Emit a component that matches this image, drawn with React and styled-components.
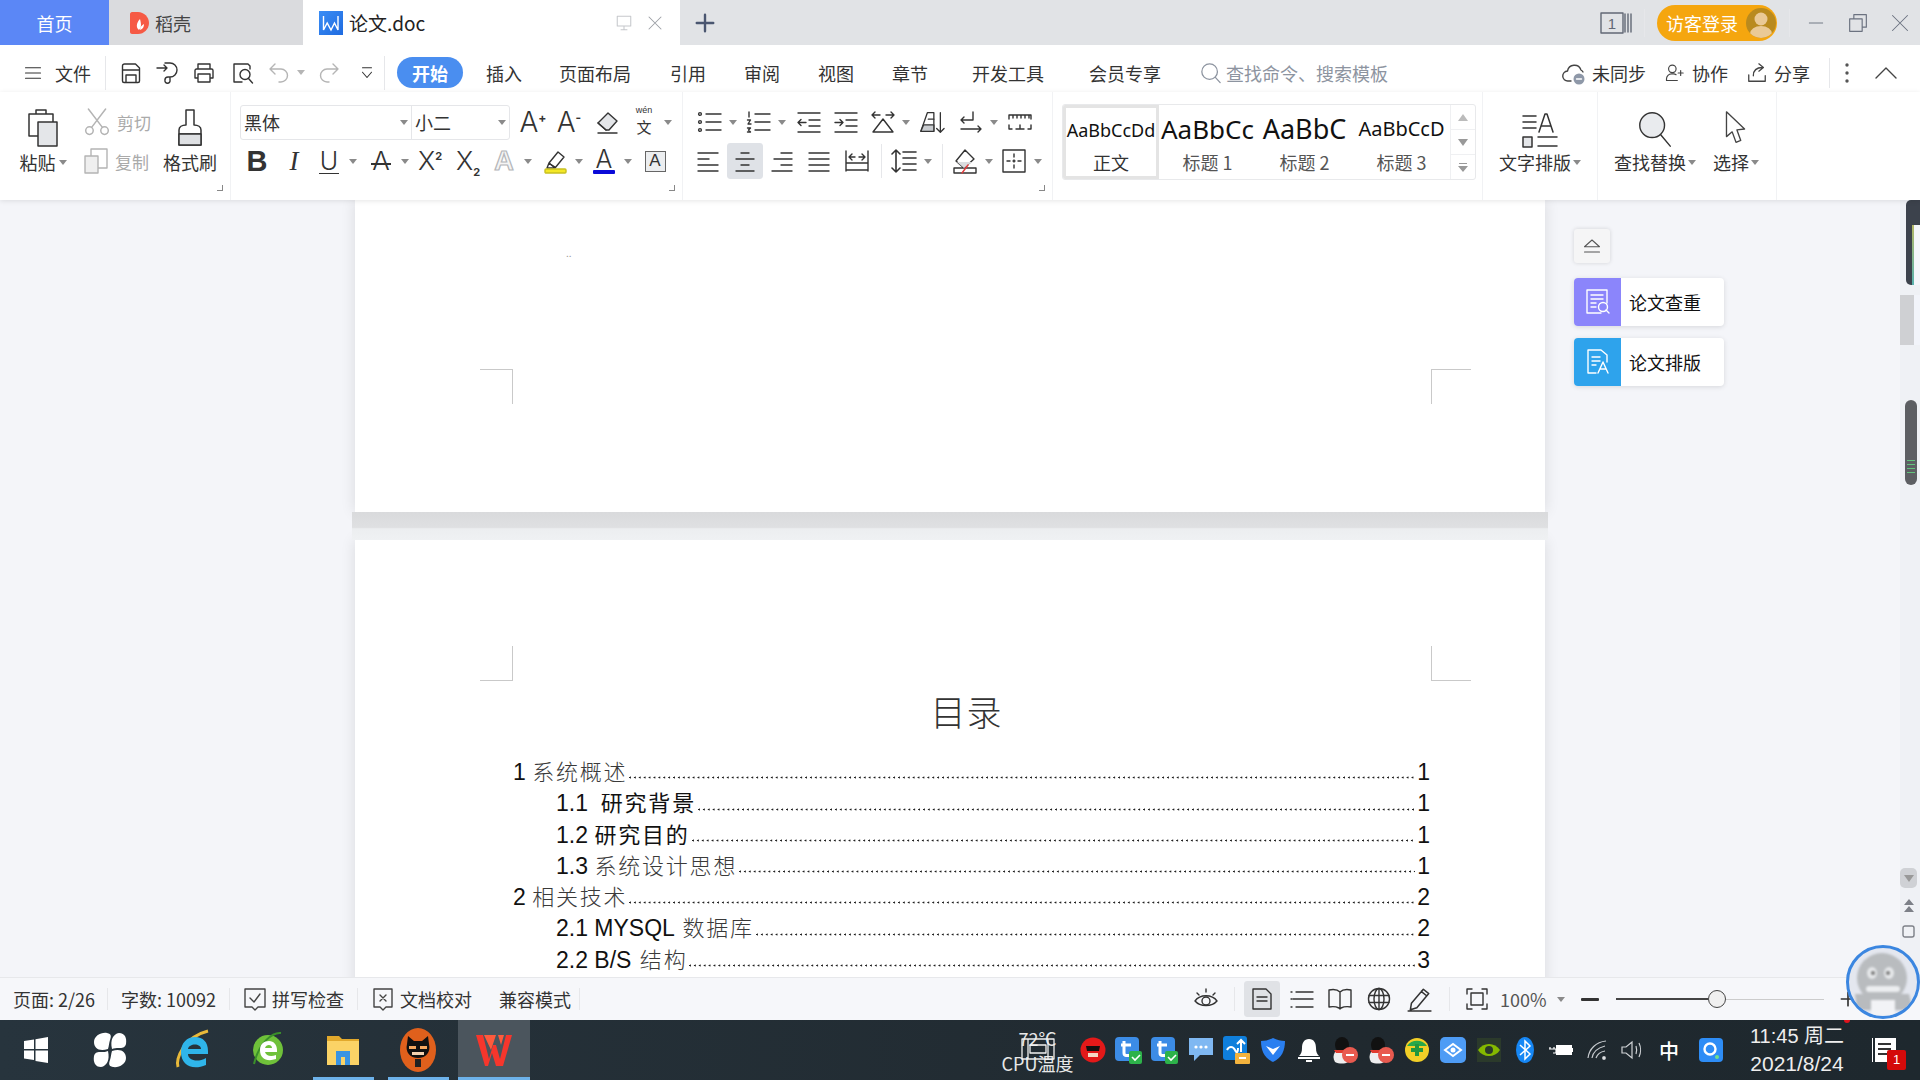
import React from "react";
import styled, { createGlobalStyle } from "styled-components";

const UI = '"Noto Sans CJK SC","Noto Sans",sans-serif';
const Global = createGlobalStyle`
  html, body { margin: 0; padding: 0; background: #fff; }
  body { font-family: ${UI}; color: #333; }
  * { box-sizing: border-box; }
`;

const Screen = styled.div`
  position: relative; width: 1920px; height: 1080px; overflow: hidden;
  display: flex; flex-direction: column; background: #f4f5f9;
`;

/* ---------- shared ---------- */
const Svg = ({ w = 24, h = 24, vb = "0 0 24 24", c = "#333", sw = 1.4, children }) => (
  <svg width={w} height={h} viewBox={vb} fill="none" stroke={c} strokeWidth={sw} strokeLinecap="round" strokeLinejoin="round">{children}</svg>
);
const P = ({ d, ...r }) => <path d={d} {...r} />;
const Caret = styled.i`
  display: block; flex: none; width: 0; height: 0; margin-left: ${p => p.$ml ?? 7}px;
  border-left: 4px solid transparent; border-right: 4px solid transparent;
  border-top: 5px solid ${p => p.$c || "#8a8a8a"};
`;
const Sep = styled.div`
  flex: none; width: 1px; height: ${p => p.$h || 32}px; margin-left: ${p => p.$ml || 0}px;
  margin-right: ${p => p.$mr || 0}px; background: #e6e7ea;
`;

/* ---------- title bar ---------- */
const TitleBar = styled.div`
  flex: none; height: 45px; display: flex; align-items: center; background: #e1e3e6;
`;
const HomeTab = styled.div`
  width: 109px; height: 100%; background: #5b87f6; color: #fff; font-size: 18px;
  display: flex; align-items: center; justify-content: center;
`;
const DaokeTab = styled.div`
  width: 194px; height: 100%; background: #dadbde; color: #444; font-size: 18px;
  display: flex; align-items: center; gap: 6px; padding-left: 21px;
`;
const DocTab = styled.div`
  width: 377px; height: 100%; background: #fff; color: #222; font-size: 19px;
  display: flex; align-items: center; padding: 0 16px 0 16px; position: relative;
`;
const DocName = styled.span` margin-left: 6px; flex: 1; font-family: "Noto Sans CJK SC","Liberation Sans",sans-serif; `;
const DocGap = styled.span` flex: none; width: 13px; `;
const PlusBtn = styled.div` margin-left: 14px; width: 22px; height: 22px; display: flex; `;
const TitleRight = styled.div` margin-left: auto; display: flex; align-items: center; `;
const LoginPill = styled.div`
  width: 120px; height: 36px; border-radius: 18px; background: #f5a60f; color: #fff; font-size: 18px;
  display: flex; align-items: center; padding-left: 9px; margin: 0 12px;
`;
const Avatar = styled.div`
  width: 30px; height: 30px; border-radius: 50%; margin-left: 8px; background: #b98a1e; overflow: hidden; flex: none;
`;
const WinBtn = styled.div` margin-left: ${p => p.$ml}px; display: flex; `;

/* ---------- menu row ---------- */
const MenuRow = styled.div`
  flex: none; height: 47px; background: #fff; display: flex; align-items: center; padding: 8px 0 0 24px; position: relative;
`;
const MenuText = styled.span`
  flex: none; margin-left: ${p => p.$ml || 0}px; font-size: 18px; line-height: 24px; color: ${p => p.$c || "#333"}; white-space: nowrap;
`;
const ActivePill = styled.span`
  flex: none; width: 66px; height: 31px; border-radius: 16px; margin-left: ${p => p.$ml}px;
  background: #4a8ef0; color: #fff; font-size: 18px; font-weight: 700;
  display: flex; align-items: center; justify-content: center;
`;
const QuickIcon = styled.div`
  flex: none; width: ${p => p.$w || 24}px; height: 24px; margin-left: ${p => p.$ml || 0}px;
  display: flex; align-items: center; justify-content: center;
`;

/* ---------- ribbon ---------- */
const Ribbon = styled.div`
  flex: none; height: 108px; background: #fff; display: flex; position: relative; z-index: 2;
  box-shadow: 0 1px 5px rgba(0,0,0,.1);
`;
const Group = styled.div`
  flex: none; position: relative; width: ${p => p.$w}px; height: 100%;
  border-right: 1px solid #f1f2f4; padding-top: 11px; padding-left: ${p => p.$pl || 0}px;
  display: ${p => p.$row ? "flex" : "block"};
`;
const Corner = styled.i`
  position: absolute; right: 7px; bottom: 9px; width: 6px; height: 6px;
  border-right: 1px solid #888; border-bottom: 1px solid #888;
`;
const ToolRow = styled.div`
  display: flex; align-items: center; height: 38px; margin-bottom: 1px; margin-left: ${p => p.$mgl || 0}px; padding-left: ${p => p.$pl || 0}px;
`;
const Tool = styled.div` flex: none; width: ${p => p.$w}px; margin-left: ${p => p.$ml || 0}px; display: flex; align-items: center; `;
const IconBox = styled.div`
  flex: none; width: 26px; height: 26px; display: flex; align-items: center; justify-content: center; position: relative;
  background: ${p => p.$active ? "#dfe2e7" : "transparent"};
  box-shadow: ${p => p.$active ? "0 0 0 5px #dfe2e7" : "none"};
  border-radius: 1px;
`;
const Glyph = styled.span`
  font-family: ${p => p.$f || '"Liberation Sans",sans-serif'}; font-size: ${p => p.$s || 24}px; line-height: 26px;
  font-weight: ${p => p.$wt || 400}; font-style: ${p => p.$it ? "italic" : "normal"}; color: ${p => p.$c || "#333"};
  position: relative; white-space: nowrap;
`;
const OutlineA = styled(Glyph)` color: #f5f5f5; -webkit-text-stroke: 1.2px #b4b6b9; `;
const UnderU = styled(Glyph)` border-bottom: 1.5px solid #333; line-height: 24px; padding: 0 1px; `;
const TopA = styled(Glyph)` line-height: 22px; margin-top: -4px; `;
const Sup = styled.sup` font-size: ${p => p.$s || 12}px; line-height: 0; vertical-align: ${p => p.$sub ? "-6px" : "10px"}; font-weight: 700; `;
const StrikeLine = styled.i` position: absolute; left: -1px; right: -1px; top: 15px; height: 1.5px; background: #333; `;
const UnderBar = styled.i`
  position: absolute; left: ${p => p.$l ?? 2}px; right: ${p => p.$l ?? 2}px; bottom: 0; height: ${p => p.$h || 4}px;
  background: ${p => p.$c}; border-radius: 1px;
`;
const FontSelect = styled.div`
  width: 270px; height: 35px; display: flex; align-items: center; border: 1px solid #e5e6e9; border-radius: 3px; flex: none;
`;
const FontCell = styled.div`
  width: ${p => p.$w}px; height: 100%; display: flex; align-items: center; justify-content: space-between;
  padding: 0 3px 0 3px; font-size: 18px; color: #333; border-right: ${p => p.$b ? "1px solid #e5e6e9" : "0"};
`;
const Pinyin = styled.div`
  width: 26px; height: 30px; margin-top: -4px; display: flex; flex-direction: column; align-items: center; color: #333;
`;
const PinyinTop = styled.span` font: 9px/10px "Liberation Sans",sans-serif; `;
const PinyinCn = styled.span` margin-top: 4px; font-size: 15px; line-height: 15px; `;
const BoxA = styled.span`
  width: 21px; height: 21px; border: 1.5px solid #666; background: #eceef0; display: flex; align-items: center; justify-content: center;
  font: 300 17px "Liberation Sans",sans-serif; color: #333;
`;

const BigTool = styled.div`
  flex: none; width: ${p => p.$w}px; margin-left: ${p => p.$ml || 0}px; height: 77px;
  display: flex; flex-direction: column; align-items: center;
`;
const BigIcon = styled.div` height: 46px; display: flex; align-items: flex-end; justify-content: center; `;
const BigLabel = styled.div`
  height: 26px; display: flex; align-items: center; font-size: 18px; color: #333; white-space: nowrap;
`;
const Mini = styled.div`
  display: flex; align-items: center; height: 38px; margin-bottom: 1px; gap: 7px; font-size: 17px; color: #aaa; white-space: nowrap;
`;
const MiniCol = styled.div` flex: none; width: 76px; margin-left: 16px; `;

const Gallery = styled.div`
  flex: none; width: 414px; height: 76px; margin: 1px 0 0 9px; display: flex;
  border: 1px solid #e8e9eb; border-radius: 3px; overflow: hidden;
`;
const StyleCard = styled.div`
  flex: none; width: ${p => p.$w}px; height: 100%; overflow: hidden; text-align: center;
  border: ${p => p.$sel ? "3px solid #e4e4e4" : "0"};
  display: flex; flex-direction: column; align-items: center;
`;
const Preview = styled.div`
  height: ${p => p.$sel ? 40 : 43}px; line-height: ${p => p.$sel ? 44 : 48}px; white-space: nowrap; color: #111;
  font-family: "Noto Sans",sans-serif; font-size: ${p => p.$s}px;
`;
const StyleName = styled.div` font-size: 18px; line-height: 28px; color: ${p => p.$c || "#555"}; `;
const GalleryScroll = styled.div`
  flex: 1; border-left: 1px solid #eff0f2; display: flex; flex-direction: column;
`;
const ScrollCell = styled.div`
  flex: 1; display: flex; align-items: center; justify-content: center; border-bottom: ${p => p.$b ? "1px solid #eff0f2" : 0};
`;

/* ---------- workspace ---------- */
const Workspace = styled.div` flex: 1; min-height: 0; display: flex; overflow: hidden; background: #f4f5f9; `;
const Canvas = styled.div` flex: none; width: 1900px; display: flex; padding-left: 355px; overflow: hidden; `;
const PageColumn = styled.div` flex: none; width: 1190px; display: flex; flex-direction: column; `;
const Page = styled.div`
  flex: none; position: relative; height: ${p => p.$h}px; background: #fff;
  box-shadow: 0 0 14px rgba(0,0,0,.11);
  padding: ${p => p.$pad || 0};
`;
const PageGap = styled.div`
  flex: none; height: 28px; margin: 0 -3px; position: relative; z-index: 1;
  background: linear-gradient(#d9dadc 0, #dfe0e2 55%, #eceef0 60%, #eff1f3 100%);
`;
const CropMark = styled.i`
  position: absolute; left: ${p => p.$x}px; top: ${p => p.$y}px; width: ${p => p.$w || 33}px; height: 35px;
  border-${p => p.$v}: 1px solid #c9c9c9; border-${p => p.$h}: 1px solid #c9c9c9;
`;
const Specks = styled.span` position: absolute; left: 211px; top: 48px; font-size: 10px; line-height: 10px; color: #999; `;
const DocTitle = styled.h1`
  margin: 0 0 22px -10px; font-size: 35px; line-height: 44px; font-weight: 300; text-align: center; color: #333; letter-spacing: 1px;
`;
const TocRow = styled.div`
  height: 31.3px; display: flex; align-items: baseline; padding-left: ${p => p.$lvl === 2 ? 43 : 0}px;
  font-family: "Liberation Sans","Noto Sans CJK SC",sans-serif; font-size: 23px; line-height: 31px; color: #111; white-space: pre;
`;
const TocCn = styled.span`
  font-family: "Noto Sans CJK SC",sans-serif; font-size: 22px; line-height: 31px; letter-spacing: 1.8px; margin-left: ${p => p.$ml || 0}px;
  font-weight: ${p => p.$bold ? 400 : 300}; color: ${p => p.$bold ? "#111" : "#3a3a3a"};
`;
const Leader = styled.span`
  flex: 1; height: 3px; align-self: flex-end; margin: 0 2px 7px 2px;
  background-image: radial-gradient(circle at 1.2px 1.5px, #222 .9px, transparent 1.15px);
  background-size: 4.9px 3px; background-repeat: repeat-x;
`;

const SidePanel = styled.div` flex: none; width: 150px; margin-left: 29px; padding-top: 29px; `;
const CollapseBtn = styled.div`
  width: 36px; height: 34px; margin-bottom: 15px; background: #f5f5f6; border-radius: 3px;
  box-shadow: 0 0 4px rgba(0,0,0,.14); display: flex; align-items: center; justify-content: center;
`;
const PaperBtn = styled.div`
  width: 150px; height: 48px; margin-bottom: 12px; background: #fff; border-radius: 4px; overflow: hidden;
  box-shadow: 0 1px 5px rgba(0,0,0,.12); display: flex; align-items: center; font-size: 18px; color: #111;
`;
const PaperIcon = styled.div`
  flex: none; width: 47px; height: 100%; margin-right: 8px; background: ${p => p.$c};
  display: flex; align-items: center; justify-content: center;
`;

const Gutter = styled.div` flex: none; width: 20px; background: #eff1f5; display: flex; flex-direction: column; `;
const MiniMap = styled.div`
  flex: none; margin: 0 0 0 6px; height: 85px; background: #3c424c; border-radius: 5px 0 0 5px; padding: 25px 0 0 6px; overflow: hidden;
`;
const MiniInner = styled.div`
  height: 60px; background: #f4f6fa; border-left: 2px solid; border-image: linear-gradient(#b5b864,#58b3b0) 1;
`;
const GreyBlock = styled.div`
  flex: none; height: 50px; margin-top: 10px; background: #cfd0d3; padding-left: 14px;
`;
const GreyInner = styled.div` height: 100%; background: #f2f4fa; `;
const Thumb = styled.div`
  flex: none; width: 12px; height: 85px; margin: 55px 0 0 5px; border-radius: 6px; background: #5d5f63;
  padding: 60px 2px 0; display: flex; flex-direction: column; gap: 3px; overflow: hidden;
`;
const ThumbLine = styled.i` flex: none; height: 1px; background: #62c47c; `;
const ArrowBtn = styled.div`
  flex: none; width: 17px; height: 20px; margin-top: 383px; border-radius: 5px; background: #cfd1d5;
  display: flex; align-items: center; justify-content: center;
`;
const GutterIcon = styled.div`
  flex: none; width: 17px; height: 14px; margin-top: ${p => p.$mt}px; display: flex; justify-content: center;
`;

/* ---------- status bar ---------- */
const StatusBar = styled.div`
  flex: none; height: 43px; background: #f6f7fa; border-top: 1px solid #e7e8eb; display: flex; align-items: center;
  padding-right: 64px; position: relative; z-index: 2; font-size: 18px; color: #333;
`;
const StatusItem = styled.div`
  flex: none; width: ${p => p.$w}px; height: 22px; padding-left: ${p => p.$pl}px; display: flex; align-items: center; gap: 5px;
  border-right: ${p => p.$b ? "1px solid #e6e7ea" : 0}; white-space: nowrap; font-size: ${p => p.$s || 18}px;
`;
const StatusRight = styled.div` margin-left: auto; display: flex; align-items: center; `;
const ViewIcon = styled.div`
  flex: none; width: 26px; height: 26px; margin-left: ${p => p.$ml || 0}px; display: flex; align-items: center; justify-content: center;
  background: ${p => p.$active ? "#e0e2e6" : "transparent"};
  box-shadow: ${p => p.$active ? "0 0 0 5px #e0e2e6" : "none"}; border-radius: 1px;
`;
const Zoom = styled.span` margin-left: 10px; font-size: 18px; color: #555; width: 50px; `;
const MinusBar = styled.i` flex: none; width: 18px; height: 3px; border-radius: 1px; background: #333; margin-left: 16px; `;
const Slider = styled.div` flex: none; position: relative; width: 208px; height: 18px; margin-left: 17px; display: flex; align-items: center; `;
const SliderFill = styled.i` width: 92px; height: 2px; background: #444; `;
const SliderKnob = styled.i` flex: none; width: 18px; height: 18px; border-radius: 50%; background: #f0f0f0; border: 1.5px solid #444; `;
const SliderRest = styled.i` flex: 1; height: 1px; background: #ccc; `;
const PlusIcon = styled.div` flex: none; width: 16px; height: 16px; margin-left: 16px; display: flex; `;

/* ---------- taskbar ---------- */
const Taskbar = styled.div`
  flex: none; height: 60px; background: linear-gradient(90deg,#27343d,#20292f 70%,#1e282e); display: flex; align-items: center; color: #fff; position: relative;
`;
const TaskSlot = styled.div`
  flex: none; position: relative; width: ${p => p.$w}px; margin-left: ${p => p.$ml || 0}px; height: 100%;
  display: flex; align-items: center; justify-content: center; background: ${p => p.$active ? "#4b555d" : "transparent"};
  &::after {
    content: ""; display: ${p => p.$under ? "block" : "none"}; position: absolute; bottom: 0; left: 50%;
    width: ${p => p.$under}px; height: 3px; margin-left: ${p => -(p.$under || 0) / 2}px; background: #6db2ea;
  }
`;
const TempWidget = styled.div`
  flex: none; position: relative; width: 73px; margin-left: 471px; height: 100%; font-size: 18px; line-height: 25px; padding-top: 6px;
  color: #e8e8e8; white-space: nowrap; text-align: center;
`;
const TempIcon = styled.div` position: absolute; left: 19px; top: 16px; `;
const TrayRow = styled.div` flex: none; display: flex; margin-left: 1px; align-items: center; height: 100%; `;
const TraySlot = styled.div` flex: none; width: ${p => p.$w || 36}px; height: 100%; display: flex; align-items: center; justify-content: center; font-size: 20px; font-weight: 500; `;
const Clock = styled.div`
  flex: none; width: 112px; margin-left: 12px; text-align: center; font-family: "Liberation Sans","Noto Sans CJK SC",sans-serif;
  font-size: 20px; line-height: 27px; color: #eee; position: relative; white-space: nowrap;
`;
const ClockDate = styled.div` font-size: 21px; `;
const RedDot = styled.i` position: absolute; right: 3px; top: -6px; width: 6px; height: 6px; border-radius: 50%; background: #e0141c; `;
const ActionCenter = styled.div` flex: none; position: relative; margin-left: 19px; width: 26px; height: 24px; display: flex; gap: 2px; `;
const ActionBar = styled.i` width: 1px; height: 24px; background: #fff; `;
const ActionPaper = styled.div`
  width: 21px; height: 24px; background: #fff; padding: 5px 3px; display: flex; flex-direction: column; gap: 3px;
`;
const ActionLine = styled.i` display: block; height: 2px; width: ${p => p.$w}px; background: #333; `;
const ActionBadge = styled.span`
  position: absolute; left: 15px; top: 12px; width: 19px; height: 20px; background: #d40a0a; color: #fff; font: 13px/20px "Liberation Sans",sans-serif; text-align: center; border-radius: 2px;
`;

const RobotBall = styled.div`
  position: absolute; left: 1846px; top: 945px; width: 74px; height: 74px; border-radius: 50%; z-index: 5;
  border: 3px solid #3b86e0; background: #e4e7ef; overflow: hidden;
  & > svg { filter: blur(1.2px); }
`;

/* ---------- icon data ---------- */
const T = ({ w, ml, icon, caret, active }) => (
  <Tool $w={w} $ml={ml}><IconBox $active={active}>{icon}</IconBox>{caret && <Caret />}</Tool>
);
const lines = ys => ys.map(([x1, x2, y], i) => <P key={i} d={`M${x1} ${y}H${x2}`} />);

const ic = {
  menu: <Svg w={20} h={20} sw={1.5}><P d="M2 5h20M2 12h20M2 19h20" /></Svg>,
  save: <Svg><P d="M3.5 5a2 2 0 0 1 2-2h11l4 4v13a1.5 1.5 0 0 1-1.5 1.5H5A1.5 1.5 0 0 1 3.5 20zM3.5 9h17M7 21v-7h10v7" /></Svg>,
  pdf: <Svg><P d="M1 7h10M8 4l3 3-3 3M9 2h5a7 7 0 0 1 0 14h-2c-2 0-3 1-3 3a2.6 2.6 0 1 0 5 0v-3" /></Svg>,
  print: <Svg><P d="M6 8V3h12v5M6 17H3V9.5A1.5 1.5 0 0 1 4.5 8h15A1.5 1.5 0 0 1 21 9.5V17h-3M6 13h12v8H6z" /></Svg>,
  preview: <Svg><P d="M20 8V5l-2-2H4v18h8" /><circle cx="15" cy="13.5" r="5" /><P d="M18.5 17.5l4 4.5" /></Svg>,
  undo: <Svg c="#b5b5b5"><P d="M8 3 3 8l5 5M3 8h11a6.5 6.5 0 0 1 0 13h-2" /></Svg>,
  redo: <Svg c="#b5b5b5"><P d="M16 3l5 5-5 5M21 8H10a6.5 6.5 0 0 0 0 13h2" /></Svg>,
  qa: <Svg w={18} h={18}><P d="M6 5h12M6 11l6 7 6-7" /></Svg>,
  search: <Svg w={22} h={22} c="#8d94a0"><circle cx="10.5" cy="10.5" r="8.5" /><P d="M16.5 16.5l5.5 6" /></Svg>,
  cloud: <Svg w={26} h={26} c="#444"><P d="M10 20H7a5 5 0 0 1-.5-10A7 7 0 0 1 20 9a5 5 0 0 1 2 2" /><circle cx="18" cy="18" r="5.5" fill="#8e98a8" stroke="none" /><P d="M15.5 18h5" stroke="#fff" /></Svg>,
  user: <Svg w={24} h={24} c="#444"><circle cx="10" cy="7" r="4.5" /><P d="M3 21v-2a6 6 0 0 1 6-6h2.5a6 6 0 0 1 3 1M3 21h13M20 9v6M17 12h6" /></Svg>,
  share: <Svg w={24} h={24} c="#444"><P d="M3 14v7h18v-6M8 15c0-6 4-9 10-9M14 2l5 4-5 4" /></Svg>,
  dots: <Svg w={6} h={24} vb="0 0 6 24" sw={0}><circle cx="3" cy="4" r="1.7" fill="#555" /><circle cx="3" cy="12" r="1.7" fill="#555" /><circle cx="3" cy="20" r="1.7" fill="#555" /></Svg>,
  chev: <Svg w={24} h={20} vb="0 0 24 20" c="#444"><P d="M2 15 12 5l10 10" /></Svg>,
  paste: <Svg w={40} h={42} vb="0 0 40 42" c="#333" sw={1.5}><P d="M15 29H6V7h24v8M13 7V3h10v4" /><rect x="15" y="15" width="19" height="24" fill="#e4e6e9" /></Svg>,
  cut: <Svg c="#b4b4b4" w={26} h={28} vb="0 0 24 26"><circle cx="5" cy="21" r="3.5" /><circle cx="19" cy="21" r="3.5" /><P d="M7 18 20 1M17 18 4 1" /></Svg>,
  copy: <Svg c="#b4b4b4" w={24} h={28} vb="0 0 24 26"><P d="M7 18V1h16v19h-9" /><rect x="1" y="8" width="13" height="17" fill="#efefef" /></Svg>,
  brush: <Svg w={32} h={42} vb="0 0 32 42" c="#333" sw={1.5}><P d="M12 18V3h8v15M12 18c-4 0-7 2-7 5v15h22V23c0-3-3-5-7-5M5 27h22" /><P d="M5 27h22v11H5z" fill="#dfe1e4" /></Svg>,
  eraser: <Svg><P d="M3 13 13 3l9 8-8 9h-3z" fill="#e4e6e9" /><P d="M3 13l8 7M3 23h19" /></Svg>,
  hl: <Svg w={26} h={26} vb="0 0 26 26"><P d="M7 15 16 4l6 5-9 11zM7 15l-2 5 8 0" /><P d="M8 16l5 3" /><rect x="3" y="21" width="21" height="4" rx="1" fill="#f4e826" stroke="#c8c020" /></Svg>,
  bul: <Svg w={26} h={24}>{<><circle cx="3" cy="4" r="1.4" /><circle cx="3" cy="12" r="1.4" /><circle cx="3" cy="20" r="1.4" /></>}{lines([[9, 24, 4], [9, 24, 12], [9, 24, 20]])}</Svg>,
  num: <Svg w={26} h={24}>{<><P d="M3 2v5" /><P d="M1.5 10h3L2 14h3" /><P d="M1.5 18h3l-2 2 2 2h-3" /></>}{lines([[9, 24, 4], [9, 24, 12], [9, 24, 20]])}</Svg>,
  ded: <Svg w={26} h={24}>{lines([[2, 24, 3], [13, 24, 10], [13, 24, 16], [2, 24, 22]])}<P d="M10 12.5H2M5 9.5l-3 3 3 3" /></Svg>,
  ind: <Svg w={26} h={24}>{lines([[2, 24, 3], [13, 24, 10], [13, 24, 16], [2, 24, 22]])}<P d="M2 12.5h8M7 9.5l3 3-3 3" /></Svg>,
  cross: <Svg w={26} h={24}><P d="M3 22 13 9l10 13zM2 5h8M5 2 2 5l3 3M24 5h-8M21 2l3 3-3 3" /></Svg>,
  sort: <Svg w={28} h={26} vb="0 0 28 26"><P d="M2 23 9 3h7v20z" /><P d="M5 16h11v7H2z" fill="#c9ccd0" /><P d="M10 10h6M23 3v21M19 20l4 4 4-4" /></Svg>,
  brk: <Svg w={26} h={24}><P d="M15 2v8H3M6 7l-3 3 3 3M3 19h20M20 16l3 3-3 3" /></Svg>,
  ruler: <Svg w={26} h={24}><P d="M2 9V5h22v4M6 5v3M10 5v3M14 5v3M18 5v3M22 5v3M2 15v4h3M9 19h8M13 15v4M21 19h3v-4" /></Svg>,
  al: <Svg>{lines([[2, 22, 4], [2, 13, 10], [2, 22, 16], [2, 22, 22]])}</Svg>,
  ac: <Svg>{lines([[8, 16, 4], [3, 21, 10], [8, 16, 16], [3, 21, 22]])}</Svg>,
  ar: <Svg>{lines([[11, 22, 4], [4, 22, 10], [11, 22, 16], [2, 22, 22]])}</Svg>,
  aj: <Svg>{lines([[2, 22, 4], [2, 22, 10], [2, 22, 16], [2, 22, 22]])}</Svg>,
  dist: <Svg w={26} h={24}><P d="M2 2v20M24 2v20M2 14h22M2 21h22M6 8h5M8 5 5 8l3 3M20 8h-5M18 5l3 3-3 3" /></Svg>,
  ls: <Svg w={26} h={26} vb="0 0 26 26" sw={1.6}><P d="M5 2v22M1 6l4-4 4 4M1 20l4 4 4-4M12 4h13M12 10h13M12 16h13M12 22h13" /></Svg>,
  fill: <Svg w={26} h={26} vb="0 0 26 26"><P d="M13 2 4 13l8 7 10-9zM2 20h22v5H2z" /><P d="M5 14h15l-8 6z" fill="#dadcdf" stroke="none" /><P d="M10 25l6-8" stroke="#e03b3b" /></Svg>,
  border: <Svg w={26} h={26} vb="0 0 26 26"><rect x="2" y="2" width="22" height="22" /><P d="M13 6v3M13 12v2M13 17v3M6 13h3M12 13h2M17 13h3" sw={1} /></Svg>,
  textfmt: <Svg w={36} h={38} vb="0 0 36 38" c="#333" sw={1.5}><P d="M1 5h13M1 11h13M1 17h13M17 21 23 3h2l6 18M19 15h10" /><rect x="1" y="26" width="9" height="10" fill="#e4e6e9" /><P d="M16 26h19M16 35h19" /></Svg>,
  find: <Svg w={36} h={40} vb="0 0 36 42" c="#333" sw={1.5}><circle cx="15" cy="17" r="13" fill="#e9ebee" /><P d="M24 27l10 12" /></Svg>,
  sel: <Svg w={26} h={40} vb="0 0 26 42" c="#444" sw={1.4}><P d="M3 3v26l6-5 4 11 5-2-4-11 8-1z" /></Svg>,
  monitor: <Svg w={18} h={18} c="#c6c8cc"><P d="M3 3h18v13H3zM12 16v5M8 21h8" /></Svg>,
  close: <Svg w={18} h={18} c="#9da0a6"><P d="M4 4l16 16M20 4 4 20" /></Svg>,
  plus: <Svg w={22} h={22} c="#4a5670" sw={2.6}><P d="M12 3v18M3 12h18" /></Svg>,
  win1: <Svg w={32} h={24} vb="0 0 32 24" c="#626875"><rect x="1" y="2" width="22" height="20" /><text x="12" y="18" fontSize="15" textAnchor="middle" fill="#626875" stroke="none" fontFamily="Liberation Sans">1</text><P d="M25 3v18M28 3v18M31 3v18" /></Svg>,
  min: <Svg w={16} h={16} c="#6b7280"><P d="M2 12h20" /></Svg>,
  restore: <Svg w={20} h={20} c="#6b7280"><P d="M7 7V2h15v15h-5M2 7h15v15H2z" /></Svg>,
  xwin: <Svg w={18} h={18} c="#6b7280"><P d="M2 2l20 20M22 2 2 22" /></Svg>,
  eject: <Svg w={18} h={18} c="#555"><P d="M2 13 12 4l10 9zM2 20h20" /></Svg>,
  paperA: <Svg w={26} h={26} vb="0 0 26 26" c="#fff"><P d="M16 24H2V1h20v13M6 6h12M6 10h12M6 14h5M6 18h5" /><circle cx="18" cy="18" r="4.5" /><P d="M21 21l3 3" /></Svg>,
  paperB: <Svg w={26} h={26} vb="0 0 26 26" c="#fff"><P d="M11 24H3V1h13l6 5v7M7 8h8M7 12h8M7 16h4M13 24l5-11 5 11M15 20h6" /></Svg>,
  spell: <Svg w={24} h={24} c="#444"><P d="M2 2h20v18h-7l-3 3-3-3H2zM7 11l4 4 6-8" /></Svg>,
  proof: <Svg w={24} h={24} c="#444"><P d="M3 2h18v18h-6l-3 3-3-3H3zM9 8l6 6M15 8l-6 6" /></Svg>,
  eye: <Svg w={26} h={24} c="#333"><P d="M1 14c5-7 17-7 22 0-5 6-17 6-22 0z" /><circle cx="12" cy="14" r="4" /><P d="M3 6l2 2M12 2v3M21 6l-2 2" /></Svg>,
  page: <Svg><P d="M3 2h13l5 5v15H3zM7 10h10M7 14h10" /></Svg>,
  list: <Svg>{lines([[1, 2, 5], [6, 23, 5], [3, 23, 12], [1, 2, 12], [6, 23, 20], [1, 2, 20]])}</Svg>,
  book: <Svg><P d="M12 5C10 3 6 2 1 3v17c5-1 8 0 10 1l1 1 1-1c2-1 5-2 10-1V3c-5-1-9 0-11 2zM12 5v17" /></Svg>,
  globe: <Svg><circle cx="12" cy="12" r="10.5" /><ellipse cx="12" cy="12" rx="5" ry="10.5" /><P d="M2 8.5h20M2 15.5h20M12 1.5v21" /></Svg>,
  pen: <Svg w={26} h={26}><P d="M5 16 16 3l5 4L10 20l-6 2zM14 5l5 4M2 23h21" /></Svg>,
  fit: <Svg><P d="M2 7V2h5M17 2h5v5M22 17v5h-5M7 22H2v-5" /><rect x="6" y="6" width="12" height="12" /></Svg>,
  plusDark: <Svg w={16} h={16} sw={2.5}><P d="M12 2v20M2 12h20" /></Svg>,
  up: <svg width="10" height="7" viewBox="0 0 10 7"><path d="M5 0l5 7H0z" fill="#bbb" /></svg>,
  dn: <svg width="10" height="7" viewBox="0 0 10 7"><path d="M5 7 0 0h10z" fill="#999" /></svg>,
  more: <svg width="10" height="9" viewBox="0 0 10 9"><path d="M1 0h8v1H1zM5 9 0 3h10z" fill="#999" /></svg>,
  dblUp: <svg width="12" height="14" viewBox="0 0 12 14"><path d="M6 0l5 6H1zM6 7l5 6H1z" fill="#7d8088" /></svg>,
  square: <Svg w={13} h={13} vb="0 0 13 13" c="#7d8088" sw={1.4}><rect x="1" y="1" width="11" height="11" rx="2" /></Svg>,
};

const WordLogo = () => (
  <svg width="24" height="24" viewBox="0 0 24 24"><defs><linearGradient id="wl" x1="0" y1="0" x2="1" y2="1"><stop offset="0" stopColor="#3a8df5" /><stop offset="1" stopColor="#1f6be0" /></linearGradient></defs>
    <rect width="24" height="24" fill="url(#wl)" /><path d="M4.5 5v14l3.7-7 3.8 7 3.5-7 3.5 7V5" stroke="#fff" strokeWidth="1.4" fill="none" /></svg>
);
const DaokeLogo = () => (
  <svg width="19" height="22" viewBox="0 0 19 22"><path d="M0 2C0 1 1 0 2 0h6c6 0 11 5 11 11s-5 11-11 11H2c-1 0-2-1-2-2z" fill="#f65a45" /><path d="M9 18c-3-2-3-7 1-11 1 4 2 8-1 11zM10 18c0-3 2-5 4-6 0 3-1 5-4 6z" fill="#fff" /></svg>
);
const AvatarArt = () => (
  <Svg w={30} h={30} vb="0 0 30 30" sw={0}><circle cx="15" cy="11" r="6.5" fill="#eac995" /><ellipse cx="15" cy="26" rx="11" ry="8" fill="#eac995" /></Svg>
);

const tIcons = {
  start: <svg width="26" height="26" viewBox="0 0 26 26" fill="#fff"><path d="M1 4l10-1.5V12H1zM12.5 2.3 25 0v12H12.5zM1 13.5h10V23L1 21.5zM12.5 13.5H25V26l-12.5-2z" /></svg>,
  fan: <svg width="34" height="36" viewBox="0 0 34 36" fill="#fff"><path d="M15 17C6 20 1 16 1 10S8 0 14 1c5 1 4 4 3 7s-1 6-2 9zM19 17c-2-9 1-15 7-16 6 0 8 5 7 11-1 4-4 4-7 4s-5 0-7 1zM19 19c9-3 14 1 14 7s-7 10-13 9c-5-1-4-4-3-7s1-6 2-9zM15 19c2 9-1 15-7 16-6 0-8-5-7-11 1-4 4-4 7-4s5 0 7-1z" /></svg>,
  ie: <svg width="36" height="42" viewBox="0 0 36 42"><path d="M4 38C1 30 10 8 34 2" fill="none" stroke="#e8b93a" strokeWidth="3" /><path d="M7 23c0-9 6-15 14-15s13 5 13 14v3H14c0 6 9 9 18 4v7c-14 6-25 0-25-13zm7-3h13c0-6-12-6-13 0z" fill="#2fb5ea" /></svg>,
  e360: <svg width="34" height="40" viewBox="0 0 34 40"><circle cx="17" cy="20" r="15" fill="#6fc13a" /><path d="M30 3C22 2 8 12 3 34" stroke="#3a8f2a" strokeWidth="2" fill="none" /><path d="M9 20c0-6 4-9 9-9s8 4 8 9v2H14c1 4 6 5 11 3v4c-9 3-16 0-16-9zm5-2h7c0-4-6-4-7 0z" fill="#fff" /></svg>,
  folder: <svg width="34" height="34" viewBox="0 0 34 34"><path d="M1 3h12l3 3h17v8H1z" fill="#e2a92c" /><path d="M1 8h32v24H1z" fill="#fbd366" /><path d="M10 32V18h14v14h-5v-8h-4v8z" fill="#3a94e2" /></svg>,
  cat: <svg width="36" height="44" viewBox="0 0 36 44"><ellipse cx="18" cy="22" rx="18" ry="22" fill="#e0601c" /><path d="M7 16l1-8 6 5h8l6-5 1 8c2 8-3 14-11 14S5 24 7 16z" fill="#111" /><path d="M9 18h7v3H9zM20 18h7v3h-7z" fill="#f6a860" /><path d="M12 24h12v3H12z" fill="#f3d2b0" /><rect x="15" y="31" width="6" height="8" fill="#222" /></svg>,
  wps: <svg width="38" height="36" viewBox="0 0 38 36"><path d="M1 3h7l6 24 4-14h3l4 14 6-24h6l-9 31h-7l-4-13-4 13H10z" fill="#f6362c" /><path d="M9 3h12L16 18zM23 3h6l-3 10z" fill="#ff5a3c" /></svg>,
};
const Shield = ({ c }) => (
  <svg width="28" height="28" viewBox="0 0 28 28"><path d="M14 2c4 2 8 3 12 3 0 9-3 17-12 21C5 22 2 14 2 5c4 0 8-1 12-3z" fill={c} /><path d="M7 10l7 9 7-9-7 3z" fill="#fff" /></svg>
);
const BlueT = () => (
  <svg width="28" height="28" viewBox="0 0 28 28"><rect y="1" width="24" height="24" rx="4" fill="#3c8ce6" /><path d="M9 5v12c0 3 3 3 7 2M6 9h10" stroke="#fff" strokeWidth="3" fill="none" /><rect x="14" y="15" width="13" height="13" rx="2" fill="#2db24a" /><path d="M17 21l3 3 5-5" stroke="#fff" strokeWidth="1.6" fill="none" /></svg>
);
const Qq = () => (
  <svg width="26" height="28" viewBox="0 0 26 28"><ellipse cx="10" cy="9" rx="7" ry="8" fill="#111" /><path d="M3 16c-2 3-2 7 0 10 4 2 10 2 13 0 2-3 2-7 0-10z" fill="#eee" /><path d="M2 14h15l-2 3H4z" fill="#e23b2e" /><circle cx="18" cy="19" r="8" fill="#e85a4f" /><path d="M14 19h8" stroke="#fff" strokeWidth="2" /></svg>
);
const tray = [
  <svg key="a" width="26" height="26" viewBox="0 0 26 26"><circle cx="13" cy="13" r="12.5" fill="#e31919" /><path d="M6 9h14l-1 5H7z" fill="#111" /><path d="M8 16h10v4H8z" fill="#f6d8c5" /></svg>,
  <BlueT key="b" />, <BlueT key="c" />,
  <svg key="d" width="28" height="26" viewBox="0 0 28 26"><path d="M2 1h24v17H13l-6 6v-6H2z" fill="#7fb8f2" /><circle cx="9" cy="10" r="1.6" fill="#fff" /><circle cx="14" cy="10" r="1.6" fill="#fff" /><circle cx="19" cy="10" r="1.6" fill="#fff" /></svg>,
  <svg key="e" width="28" height="28" viewBox="0 0 28 28"><rect width="24" height="24" rx="3" fill="#0f7fdc" /><path d="M4 14c2-4 6-4 8 0s3 2 3-2M18 16V4M14 8l4-4 4 4" stroke="#fff" strokeWidth="2" fill="none" /><rect x="12" y="17" width="15" height="11" rx="1" fill="#f3b33d" /><path d="M16 22h7" stroke="#fff" strokeWidth="2" /></svg>,
  <Shield key="f" c="#2a7ff0" />,
  <svg key="g" width="22" height="26" viewBox="0 0 22 26" fill="#fff"><path d="M11 2c5 0 7 4 7 9 0 4 1 6 3 8H1c2-2 3-4 3-8 0-5 2-9 7-9z" /><rect y="20" width="22" height="2" /><rect x="8" y="23" width="6" height="2" /></svg>,
  <Qq key="h" />, <Qq key="i" />,
  <svg key="j" width="24" height="24" viewBox="0 0 24 24"><circle cx="12" cy="12" r="12" fill="#f2cf27" /><path d="M2 8a12 12 0 0 1 20 0z" fill="#27a84a" /><path d="M12 6v12M6 12h12" stroke="#20963f" strokeWidth="4" /></svg>,
  <svg key="k" width="26" height="26" viewBox="0 0 26 26"><rect width="26" height="26" rx="5" fill="#4e9cf5" /><path d="M5 13l8-6 8 6-8 6z" fill="none" stroke="#fff" strokeWidth="2" /><circle cx="13" cy="13" r="2.5" fill="#fff" /></svg>,
  <svg key="l" width="24" height="24" viewBox="0 0 24 24"><rect width="24" height="24" fill="#2b3a2b" /><path d="M1 12c5-8 17-8 22 0-5 8-17 8-22 0z" fill="#85b900" /><circle cx="12" cy="12" r="4" fill="#2b3a2b" /></svg>,
  <svg key="m" width="18" height="26" viewBox="0 0 18 26"><ellipse cx="9" cy="13" rx="9" ry="13" fill="#1687f5" /><path d="M4 8l10 9-5 5V4l5 5L4 18" stroke="#fff" strokeWidth="1.5" fill="none" /></svg>,
  <svg key="n" width="24" height="14" viewBox="0 0 24 14"><path d="M1 4v2M5 4v2M0 6h7v4H4" stroke="#fff" strokeWidth="1.2" fill="none" /><rect x="7" y="2" width="16" height="10" fill="#fff" /><rect x="22" y="5" width="2" height="4" fill="#fff" /></svg>,
  <svg key="o" width="20" height="20" viewBox="0 0 20 20" fill="none" stroke="#c8ccd0" strokeWidth="1.2"><path d="M1 18C2 9 9 2 19 1M5 18c1-6 5-10 13-12M9 18c1-3 3-6 9-7" /><circle cx="17" cy="18" r="1.3" fill="#fff" /></svg>,
  <svg key="p" width="24" height="20" viewBox="0 0 24 20" fill="none" stroke="#d0d3d6" strokeWidth="1.2"><path d="M1 7h4l6-5v16l-6-5H1zM15 6c1 3 1 5 0 8M18 3c2 4 2 10 0 14" /></svg>,
  <span key="q">中</span>,
];

const Robot = () => (
  <svg width="68" height="68" viewBox="0 0 68 68">
    <ellipse cx="33" cy="30" rx="25" ry="25" fill="#b9bcbf" />
    <path d="M6 46h54l4 16H8z" fill="#b8bbbe" />
    <rect x="22" y="52" width="24" height="16" fill="#f2f3f6" />
    <rect x="17" y="38" width="34" height="6" rx="3" fill="#eceef0" />
    <ellipse cx="23" cy="25" rx="5" ry="6" fill="#e6e8ea" /><ellipse cx="40" cy="25" rx="5" ry="6" fill="#e6e8ea" />
    <circle cx="24" cy="25" r="2" fill="#777" /><circle cx="39" cy="25" r="2" fill="#777" />
  </svg>
);

const Toc = [
  { lvl: 1, parts: [["1 "], ["系统概述", false, 0]], n: 1 },
  { lvl: 2, parts: [["1.1  "], ["研究背景", true, 0]], n: 1 },
  { lvl: 2, parts: [["1.2 "], ["研究目的", true, 0]], n: 1 },
  { lvl: 2, parts: [["1.3 "], ["系统设计思想", false, 0]], n: 1 },
  { lvl: 1, parts: [["2 "], ["相关技术", false, 0]], n: 2 },
  { lvl: 2, parts: [["2.1 MYSQL "], ["数据库", false, 2]], n: 2 },
  { lvl: 2, parts: [["2.2 B/S "], ["结构", false, 2]], n: 3 },
];

const g = (ch, p = {}) => <Glyph {...p}>{ch}</Glyph>;
const thinA = { $f: 'Inter,"Liberation Sans",sans-serif', $wt: 300 };

export default function App() {
  return (
    <Screen>
      <Global />
      <TitleBar>
        <HomeTab>首页</HomeTab>
        <DaokeTab><DaokeLogo />稻壳</DaokeTab>
        <DocTab>
          <WordLogo /><DocName>论文.doc</DocName>{ic.monitor}<DocGap />{ic.close}
        </DocTab>
        <PlusBtn>{ic.plus}</PlusBtn>
        <TitleRight>
          {ic.win1}
          <Sep $h={28} $ml={12} />
          <LoginPill>访客登录<Avatar><AvatarArt /></Avatar></LoginPill>
          <Sep $h={28} />
          <WinBtn $ml={18}>{ic.min}</WinBtn>
          <WinBtn $ml={24}>{ic.restore}</WinBtn>
          <WinBtn $ml={23}>{ic.xwin}</WinBtn>
          <WinBtn $ml={11} />
        </TitleRight>
      </TitleBar>

      <MenuRow>
        <QuickIcon $w={18}>{ic.menu}</QuickIcon>
        <MenuText $ml={13}>文件</MenuText>
        <Sep $ml={14} $h={34} />
        <QuickIcon $ml={13}>{ic.save}</QuickIcon>
        <QuickIcon $ml={13}>{ic.pdf}</QuickIcon>
        <QuickIcon $ml={12}>{ic.print}</QuickIcon>
        <QuickIcon $ml={14}>{ic.preview}</QuickIcon>
        <QuickIcon $ml={13}>{ic.undo}</QuickIcon>
        <Caret $ml={6} $c="#b5b5b5" />
        <QuickIcon $ml={12}>{ic.redo}</QuickIcon>
        <QuickIcon $ml={14}>{ic.qa}</QuickIcon>
        <Sep $ml={5} $h={34} />
        <ActivePill $ml={12}>开始</ActivePill>
        <MenuText $ml={23}>插入</MenuText>
        <MenuText $ml={37}>页面布局</MenuText>
        <MenuText $ml={39}>引用</MenuText>
        <MenuText $ml={38}>审阅</MenuText>
        <MenuText $ml={38}>视图</MenuText>
        <MenuText $ml={38}>章节</MenuText>
        <MenuText $ml={44}>开发工具</MenuText>
        <MenuText $ml={45}>会员专享</MenuText>
        <QuickIcon $ml={39} $w={22}>{ic.search}</QuickIcon>
        <MenuText $ml={4} $c="#8d94a0">查找命令、搜索模板</MenuText>
        <QuickIcon $ml={173}>{ic.cloud}</QuickIcon>
        <MenuText $ml={7}>未同步</MenuText>
        <QuickIcon $ml={18} $w={20}>{ic.user}</QuickIcon>
        <MenuText $ml={8}>协作</MenuText>
        <QuickIcon $ml={18} $w={22}>{ic.share}</QuickIcon>
        <MenuText $ml={6}>分享</MenuText>
        <Sep $ml={19} $h={30} />
        <QuickIcon $ml={5}>{ic.dots}</QuickIcon>
        <QuickIcon $ml={15}>{ic.chev}</QuickIcon>
      </MenuRow>

      <Ribbon>
        <Group $w={231} $row $pl={18}>
          <BigTool $w={50}>
            <BigIcon>{ic.paste}</BigIcon>
            <BigLabel>粘贴<Caret $ml={3} /></BigLabel>
          </BigTool>
          <MiniCol>
            <Mini>{ic.cut}<span>剪切</span></Mini>
            <Mini>{ic.copy}<span>复制</span></Mini>
          </MiniCol>
          <BigTool $w={60}>
            <BigIcon>{ic.brush}</BigIcon>
            <BigLabel>格式刷</BigLabel>
          </BigTool>
          <Corner />
        </Group>

        <Group $w={452} $pl={9}>
          <ToolRow>
            <FontSelect>
              <FontCell $w={171} $b>黑体<Caret /></FontCell>
              <FontCell $w={97}>小二<Caret /></FontCell>
            </FontSelect>
            <T ml={10} w={36} icon={<Glyph {...thinA} $s={28}>A<Sup>+</Sup></Glyph>} />
            <T w={38} icon={<Glyph {...thinA} $s={28}>A<Sup>-</Sup></Glyph>} />
            <T w={37} icon={ic.eraser} />
            <T w={52} caret icon={<Pinyin><PinyinTop>wén</PinyinTop><PinyinCn>文</PinyinCn></Pinyin>} />
          </ToolRow>
          <ToolRow $pl={4}>
            <T w={37} icon={g("B", { $s: 29, $wt: 700 })} />
            <T w={35} icon={g("I", { $s: 27, $it: true, $f: '"Liberation Serif",serif' })} />
            <T w={52} caret icon={<UnderU {...thinA} $s={25}>U</UnderU>} />
            <T w={49} caret icon={<Glyph {...thinA} $s={26}>A<StrikeLine /></Glyph>} />
            <T w={38} icon={<Glyph {...thinA} $s={26}>X<Sup $s={11}>2</Sup></Glyph>} />
            <T w={36} icon={<Glyph {...thinA} $s={26}>X<Sup $sub $s={11}>2</Sup></Glyph>} />
            <T w={51} caret icon={<OutlineA $s={27} $wt={700}>A</OutlineA>} />
            <T w={49} caret icon={ic.hl} />
            <T w={51} caret icon={<><TopA {...thinA} $s={25}>A</TopA><UnderBar $c="#0a0ad8" /></>} />
            <T w={26} icon={<BoxA>A</BoxA>} />
          </ToolRow>
          <Corner />
        </Group>

        <Group $w={370} $pl={13}>
          <ToolRow>
            <T w={49} caret icon={ic.bul} />
            <T w={50} caret icon={ic.num} />
            <T w={37} icon={ic.ded} />
            <T w={37} icon={ic.ind} />
            <T w={50} caret icon={ic.cross} />
            <T w={38} icon={ic.sort} />
            <T w={49} caret icon={ic.brk} />
            <T w={26} icon={ic.ruler} />
          </ToolRow>
          <ToolRow $mgl={-1}>
            <T w={37} icon={ic.al} />
            <T w={37} active icon={ic.ac} />
            <T w={37} icon={ic.ar} />
            <T w={37} icon={ic.aj} />
            <T w={38} icon={ic.dist} />
            <Sep $mr={9} $h={34} />
            <T w={51} caret icon={ic.ls} />
            <Sep $mr={9} $h={34} />
            <T w={49} caret icon={ic.fill} />
            <T w={50} caret icon={ic.border} />
          </ToolRow>
          <Corner />
        </Group>

        <Group $w={430} $row>
          <Gallery>
            <StyleCard $w={96} $sel>
              <Preview $sel $s={18}>AaBbCcDd</Preview>
              <StyleName $c="#333">正文</StyleName>
            </StyleCard>
            <StyleCard $w={97}>
              <Preview $s={26}>AaBbCc</Preview>
              <StyleName>标题 1</StyleName>
            </StyleCard>
            <StyleCard $w={97}>
              <Preview $s={27}>AaBbC</Preview>
              <StyleName>标题 2</StyleName>
            </StyleCard>
            <StyleCard $w={97}>
              <Preview $s={20}>AaBbCcD</Preview>
              <StyleName>标题 3</StyleName>
            </StyleCard>
            <GalleryScroll>
              <ScrollCell $b>{ic.up}</ScrollCell>
              <ScrollCell $b>{ic.dn}</ScrollCell>
              <ScrollCell>{ic.more}</ScrollCell>
            </GalleryScroll>
          </Gallery>
        </Group>

        <Group $w={115} $row>
          <BigTool $w={84} $ml={15}>
            <BigIcon>{ic.textfmt}</BigIcon>
            <BigLabel>文字排版<Caret $ml={2} /></BigLabel>
          </BigTool>
        </Group>

        <Group $w={179} $row>
          <BigTool $w={84} $ml={15}>
            <BigIcon>{ic.find}</BigIcon>
            <BigLabel>查找替换<Caret $ml={2} /></BigLabel>
          </BigTool>
          <BigTool $w={48} $ml={15}>
            <BigIcon>{ic.sel}</BigIcon>
            <BigLabel>选择<Caret $ml={2} /></BigLabel>
          </BigTool>
        </Group>
      </Ribbon>

      <Workspace>
        <Canvas>
          <PageColumn>
            <Page $h={312}>
              <Specks>..</Specks>
              <CropMark $x={125} $y={169} $v="top" $h="right" />
              <CropMark $x={1076} $y={169} $w={40} $v="top" $h="left" />
            </Page>
            <PageGap />
            <Page $h={600} $pad="149px 115px 0 158px">
              <CropMark $x={125} $y={106} $v="bottom" $h="right" />
              <CropMark $x={1076} $y={106} $w={40} $v="bottom" $h="left" />
              <DocTitle>目录</DocTitle>
              {Toc.map((r, i) => (
                <TocRow key={i} $lvl={r.lvl}>
                  {r.parts[0][0]}
                  <TocCn $bold={r.parts[1][1]} $ml={r.parts[1][2]}>{r.parts[1][0]}</TocCn>
                  <Leader />
                  {r.n}
                </TocRow>
              ))}
            </Page>
          </PageColumn>
          <SidePanel>
            <CollapseBtn>{ic.eject}</CollapseBtn>
            <PaperBtn><PaperIcon $c="#8b85fb">{ic.paperA}</PaperIcon>论文查重</PaperBtn>
            <PaperBtn><PaperIcon $c="#2ea3ec">{ic.paperB}</PaperIcon>论文排版</PaperBtn>
          </SidePanel>
        </Canvas>
        <Gutter>
          <MiniMap><MiniInner /></MiniMap>
          <GreyBlock><GreyInner /></GreyBlock>
          <Thumb>{[0, 1, 2, 3].map(i => <ThumbLine key={i} />)}</Thumb>
          <ArrowBtn>{ic.dn}</ArrowBtn>
          <GutterIcon $mt={11}>{ic.dblUp}</GutterIcon>
          <GutterIcon $mt={12}>{ic.square}</GutterIcon>
        </Gutter>
      </Workspace>

      <StatusBar>
        <StatusItem $w={108} $pl={13} $b>页面: 2/26</StatusItem>
        <StatusItem $w={122} $pl={13} $b>字数: 10092</StatusItem>
        <StatusItem $w={128} $pl={13} $b>{ic.spell}拼写检查</StatusItem>
        <StatusItem $w={128} $pl={13}>{ic.proof}文档校对</StatusItem>
        <StatusItem $w={94} $pl={13} $b>兼容模式</StatusItem>
        <StatusRight>
          <ViewIcon>{ic.eye}</ViewIcon>
          <Sep $ml={15} $h={24} />
          <ViewIcon $ml={14} $active>{ic.page}</ViewIcon>
          <ViewIcon $ml={14}>{ic.list}</ViewIcon>
          <ViewIcon $ml={12}>{ic.book}</ViewIcon>
          <ViewIcon $ml={13}>{ic.globe}</ViewIcon>
          <ViewIcon $ml={14}>{ic.pen}</ViewIcon>
          <Sep $ml={17} $h={24} />
          <ViewIcon $ml={14}>{ic.fit}</ViewIcon>
          <Zoom>100%</Zoom>
          <Caret />
          <MinusBar />
          <Slider><SliderFill /><SliderKnob /><SliderRest /></Slider>
          <PlusIcon>{ic.plusDark}</PlusIcon>
        </StatusRight>
      </StatusBar>

      <Taskbar>
        <TaskSlot $w={72}>{tIcons.start}</TaskSlot>
        <TaskSlot $w={76}>{tIcons.fan}</TaskSlot>
        <TaskSlot $w={88}>{tIcons.ie}</TaskSlot>
        <TaskSlot $w={64}>{tIcons.e360}</TaskSlot>
        <TaskSlot $w={86} $under={61}>{tIcons.folder}</TaskSlot>
        <TaskSlot $w={64} $under={61}>{tIcons.cat}</TaskSlot>
        <TaskSlot $w={72} $ml={8} $active $under={72}>{tIcons.wps}</TaskSlot>
        <TempWidget>
          <div>72°C</div>
          <div>CPU温度</div>
          <TempIcon>
            <Svg w={36} h={24} vb="0 0 36 24" c="#f2f2f2" sw={1.3}><P d="M2 3h32v20H2zM8 3v20M28 3v20M10 9h16v8H10z" /></Svg>
          </TempIcon>
        </TempWidget>
        <TrayRow>
          {tray.map((t, i) => <TraySlot key={i}>{t}</TraySlot>)}
          <TraySlot $w={6} />
          <TraySlot>
            <svg width="24" height="24" viewBox="0 0 24 24"><rect width="24" height="24" rx="4" fill="#2e8df6" /><circle cx="11" cy="11" r="5.5" fill="none" stroke="#fff" strokeWidth="2.4" /><circle cx="18" cy="19" r="2" fill="#6fe08a" /></svg>
          </TraySlot>
        </TrayRow>
        <Clock><RedDot /><div>11:45 周二</div><ClockDate>2021/8/24</ClockDate></Clock>
        <ActionCenter>
          <ActionBar />
          <ActionPaper><ActionLine $w={13} /><ActionLine $w={13} /><ActionLine $w={9} /></ActionPaper>
          <ActionBadge>1</ActionBadge>
        </ActionCenter>
      </Taskbar>

      <RobotBall><Robot /></RobotBall>
    </Screen>
  );
}
